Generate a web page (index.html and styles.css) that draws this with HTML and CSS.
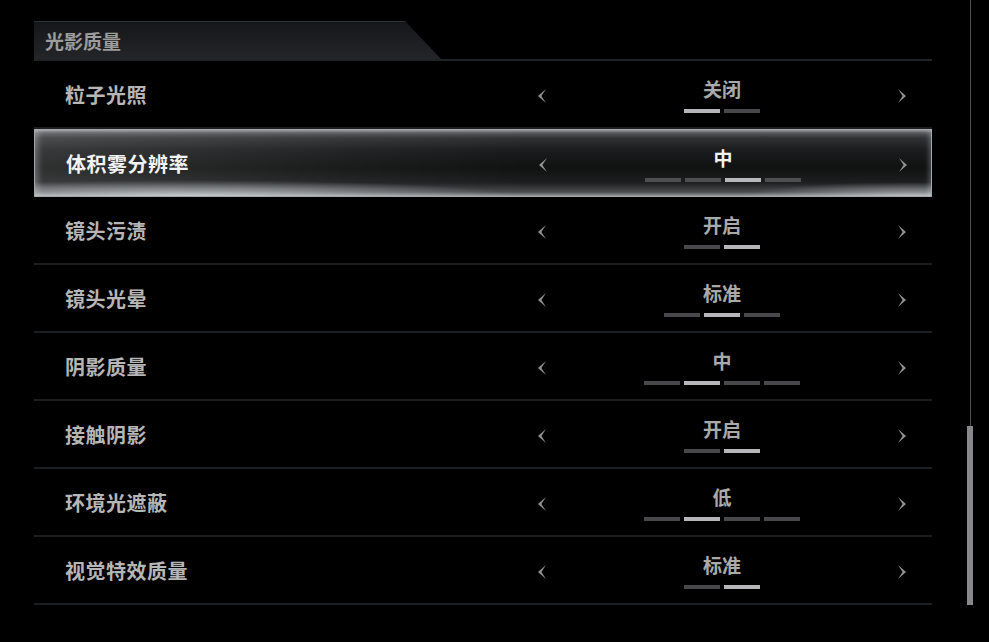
FILE: index.html
```html
<!DOCTYPE html>
<html lang="zh-CN">
<head>
    <meta charset="UTF-8">
    <title>光影质量</title>
    <meta name="viewport" content="width=device-width, initial-scale=1.0">
    <link rel="stylesheet" href="styles.css">
</head>
<body>
    <div class="screen">
        <div class="panel">
            <div class="section-head">
                <div class="section-tab">光影质量</div>
            </div>

            <div class="row">
                <span class="label">粒子光照</span>
                <svg class="arrow" viewBox="0 0 8 14"><path d="M8 0 L0 7 L8 14 L3.4 7 Z"/></svg>
                <div class="value">
                    <span class="value-text">关闭</span>
                    <div class="steps"><i class="on"></i><i></i></div>
                </div>
                <svg class="arrow" viewBox="0 0 8 14"><path d="M0 0 L8 7 L0 14 L4.6 7 Z"/></svg>
            </div>

            <div class="row active">
                <span class="label">体积雾分辨率</span>
                <svg class="arrow" viewBox="0 0 8 14"><path d="M8 0 L0 7 L8 14 L3.4 7 Z"/></svg>
                <div class="value">
                    <span class="value-text">中</span>
                    <div class="steps"><i></i><i></i><i class="on"></i><i></i></div>
                </div>
                <svg class="arrow" viewBox="0 0 8 14"><path d="M0 0 L8 7 L0 14 L4.6 7 Z"/></svg>
            </div>

            <div class="row">
                <span class="label">镜头污渍</span>
                <svg class="arrow" viewBox="0 0 8 14"><path d="M8 0 L0 7 L8 14 L3.4 7 Z"/></svg>
                <div class="value">
                    <span class="value-text">开启</span>
                    <div class="steps"><i></i><i class="on"></i></div>
                </div>
                <svg class="arrow" viewBox="0 0 8 14"><path d="M0 0 L8 7 L0 14 L4.6 7 Z"/></svg>
            </div>

            <div class="row">
                <span class="label">镜头光晕</span>
                <svg class="arrow" viewBox="0 0 8 14"><path d="M8 0 L0 7 L8 14 L3.4 7 Z"/></svg>
                <div class="value">
                    <span class="value-text">标准</span>
                    <div class="steps"><i></i><i class="on"></i><i></i></div>
                </div>
                <svg class="arrow" viewBox="0 0 8 14"><path d="M0 0 L8 7 L0 14 L4.6 7 Z"/></svg>
            </div>

            <div class="row">
                <span class="label">阴影质量</span>
                <svg class="arrow" viewBox="0 0 8 14"><path d="M8 0 L0 7 L8 14 L3.4 7 Z"/></svg>
                <div class="value">
                    <span class="value-text">中</span>
                    <div class="steps"><i></i><i class="on"></i><i></i><i></i></div>
                </div>
                <svg class="arrow" viewBox="0 0 8 14"><path d="M0 0 L8 7 L0 14 L4.6 7 Z"/></svg>
            </div>

            <div class="row">
                <span class="label">接触阴影</span>
                <svg class="arrow" viewBox="0 0 8 14"><path d="M8 0 L0 7 L8 14 L3.4 7 Z"/></svg>
                <div class="value">
                    <span class="value-text">开启</span>
                    <div class="steps"><i></i><i class="on"></i></div>
                </div>
                <svg class="arrow" viewBox="0 0 8 14"><path d="M0 0 L8 7 L0 14 L4.6 7 Z"/></svg>
            </div>

            <div class="row">
                <span class="label">环境光遮蔽</span>
                <svg class="arrow" viewBox="0 0 8 14"><path d="M8 0 L0 7 L8 14 L3.4 7 Z"/></svg>
                <div class="value">
                    <span class="value-text">低</span>
                    <div class="steps"><i></i><i class="on"></i><i></i><i></i></div>
                </div>
                <svg class="arrow" viewBox="0 0 8 14"><path d="M0 0 L8 7 L0 14 L4.6 7 Z"/></svg>
            </div>

            <div class="row">
                <span class="label">视觉特效质量</span>
                <svg class="arrow" viewBox="0 0 8 14"><path d="M8 0 L0 7 L8 14 L3.4 7 Z"/></svg>
                <div class="value">
                    <span class="value-text">标准</span>
                    <div class="steps"><i></i><i class="on"></i></div>
                </div>
                <svg class="arrow" viewBox="0 0 8 14"><path d="M0 0 L8 7 L0 14 L4.6 7 Z"/></svg>
            </div>
        </div>

        <div class="scrollbar">
            <div class="scroll-track"></div>
            <div class="scroll-thumb"></div>
        </div>
    </div>
</body>
</html>
```

FILE: styles.css
```css
body {
    margin: 0;
    height: 100vh;
    background: #000;
    overflow: hidden;
    font-family: "Noto Sans CJK SC", "Noto Sans", sans-serif;
}
.screen {
    display: flex;
    align-items: flex-start;
    padding-left: 34px;
    gap: 35px;
}
.panel {
    width: 898px;
    padding-top: 21px;
}

/* cabecalho com aba inclinada */
.section-head {
    display: flex;
    border-bottom: 2px solid #202326;
}
.section-tab {
    width: 407px;
    height: 38px;
    box-sizing: border-box;
    padding-left: 11px;
    display: flex;
    align-items: center;
    background: linear-gradient(to bottom, #151618 0%, #1d1f22 60%, #232528 100%);
    box-shadow: inset 0 1px 0 #2c2f33;
    clip-path: polygon(0 0, 371px 0, 100% 100%, 0 100%);
    color: #9c9c9c;
    font-size: 19px;
    font-weight: 700;
}

.row {
    height: 68px;
    box-sizing: border-box;
    padding: 0 26px 0 31px;
    border-bottom: 2px solid #1c1f22;
    display: grid;
    grid-template-columns: 473px 8px 352px 8px;
    align-items: center;
}
.label {
    color: #b6b6b6;
    font-size: 20px;
    font-weight: 700;
    letter-spacing: 0.5px;
}
.arrow {
    width: 8px;
    height: 14px;
    margin-top: 4px;
    fill: #929292;
}
.value {
    display: flex;
    flex-direction: column;
    align-items: center;
    margin-top: 3px;
}
.value-text {
    color: #a9a9a9;
    font-size: 19px;
    font-weight: 700;
    line-height: 22px;
}
.steps {
    display: flex;
    gap: 4px;
    margin-top: 9px;
}
.steps i {
    width: 36px;
    height: 4px;
    background: #48484b;
}
.steps i.on {
    background: #b6b6ba;
}

/* linha selecionada */
.row.active {
    border: 1px solid #a4a6a8;
    background:
        radial-gradient(ellipse 330px 16px at 150px 100%, rgba(205,210,214,0.8), rgba(205,210,214,0) 100%),
        radial-gradient(ellipse 170px 14px at 880px 100%, rgba(205,210,214,0.65), rgba(205,210,214,0) 100%),
        linear-gradient(to right, rgba(255,255,255,0.13) 0%, rgba(255,255,255,0.04) 35%, rgba(255,255,255,0) 55%),
        linear-gradient(to bottom, #8c8e90 0px, #55585a 3px, #303234 8px, #1a1c1d 30%, #101111 58%, #1d1f20 80%, #4a4c4e 94%, #8e9092 100%);
    box-shadow: inset 5px 0 6px -2px rgba(220,224,228,0.35), inset -4px 0 5px -2px rgba(220,224,228,0.3);
}
.row.active .label,
.row.active .value-text {
    color: #f2f2f2;
}
.row.active .steps i {
    background: #4e4f51;
}
.row.active .steps i.on {
    background: #b8b8bc;
}

.scrollbar {
    width: 6px;
    height: 605px;
    display: flex;
    flex-direction: column;
    align-items: center;
}
.scroll-track {
    flex: 1;
    width: 1px;
    background: #4f4f53;
}
.scroll-thumb {
    width: 6px;
    height: 179px;
    background: #88888c;
}
```
